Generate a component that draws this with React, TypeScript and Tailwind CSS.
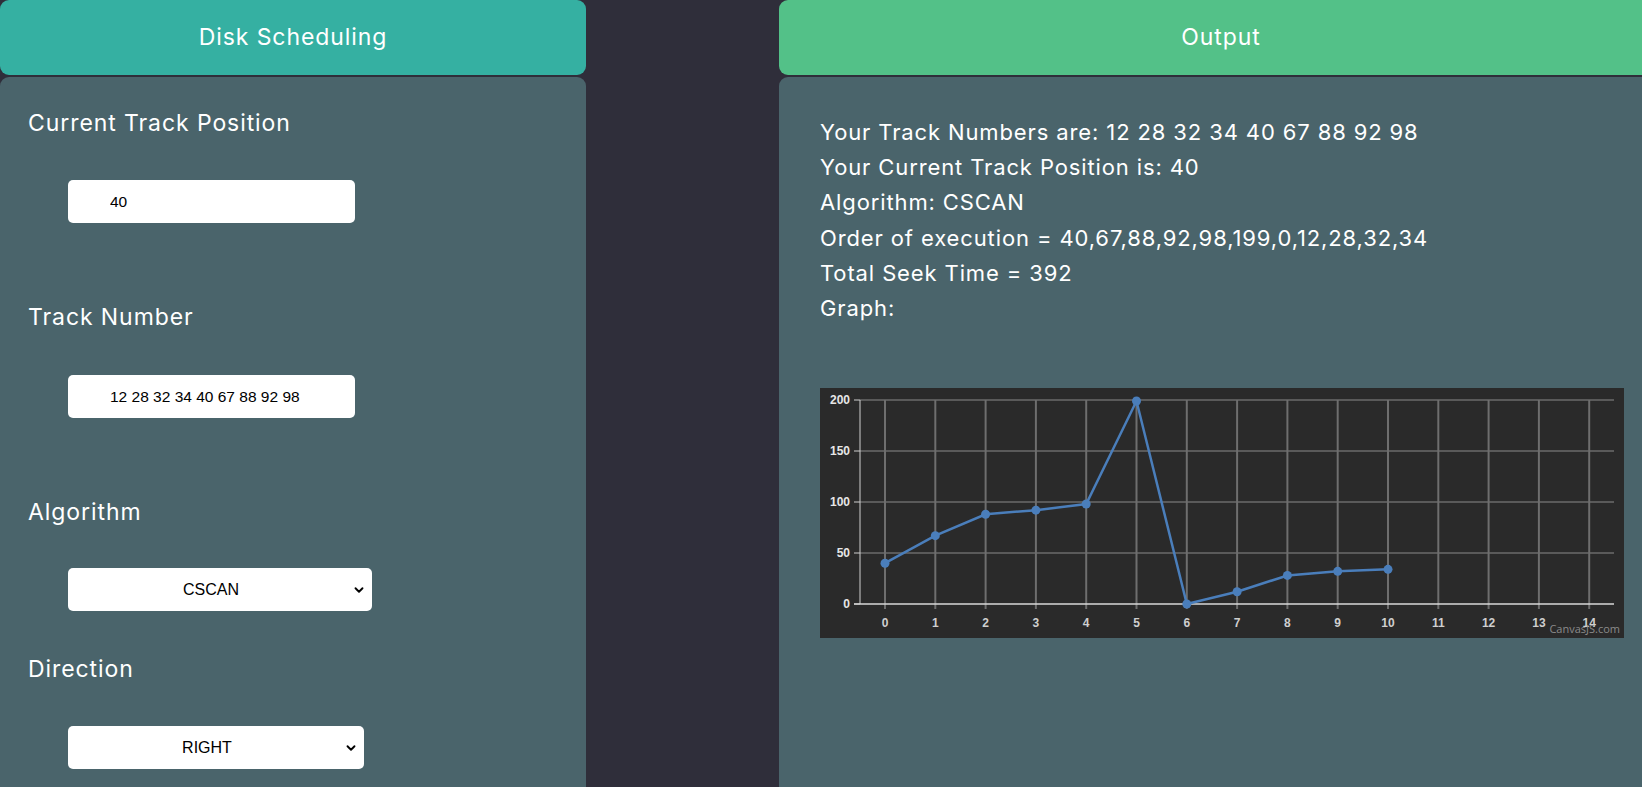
import { ChevronDown } from "lucide-react";

const font = { fontFamily: "Inter, 'Noto Sans', sans-serif" };

const TRACKS = [40, 67, 88, 92, 98, 199, 0, 12, 28, 32, 34];

function Label({ text, mt }: { text: string; mt: string }) {
  return (
    <div className={`${mt} h-[33px] leading-[33px] text-[23px] tracking-[0.04em] text-white`}>
      {text}
    </div>
  );
}

function TextBox({ value, mt }: { value: string; mt: string }) {
  return (
    <input
      readOnly
      value={value}
      className={`${mt} ml-[40px] h-[43px] w-[287px] rounded-[5px] bg-white pl-[42px] text-[15.5px] text-black outline-none`}
      style={{ fontFamily: "'Liberation Sans', Arial, sans-serif" }}
    />
  );
}

function Dropdown({ value, width, mt }: { value: string; width: string; mt: string }) {
  return (
    <div className={`${mt} relative ml-[40px] h-[43px] ${width}`}>
      <select
        value={value}
        onChange={() => {}}
        className="h-full w-full appearance-none rounded-[5px] bg-white pr-[18px] text-center text-[16px] text-black outline-none"
        style={{ fontFamily: "'Liberation Sans', Arial, sans-serif" }}
      >
        <option>{value}</option>
      </select>
      <ChevronDown
        size={14}
        strokeWidth={3.2}
        className="pointer-events-none absolute right-[6px] top-1/2 -translate-y-1/2 text-black"
      />
    </div>
  );
}

function Chart() {
  const x0 = 65;
  const step = 50.3;
  const yTop = 12;
  const yBase = 216;
  const yOf = (v: number) => yBase - v * ((yBase - yTop) / 200);
  const xs = Array.from({ length: 15 }, (_, i) => x0 + i * step);
  const pts = TRACKS.map((v, i) => `${x0 + i * step},${yOf(v)}`).join(" ");
  const labelFont = "'Liberation Sans', Arial, sans-serif";
  return (
    <div className="mt-[62px] h-[250px] w-[804px] bg-[#2a2a2a]">
      <svg width="804" height="250" viewBox="0 0 804 250">
        {[50, 100, 150, 200].map((v) => (
          <line key={v} x1={40} x2={794} y1={yOf(v)} y2={yOf(v)} stroke="#8a8a8a" strokeWidth={1} />
        ))}
        {xs.map((x, i) => (
          <line key={i} x1={x} x2={x} y1={yTop} y2={yBase + 5} stroke="#6e6e6e" strokeWidth={2} />
        ))}
        <line x1={40} x2={40} y1={yTop} y2={yBase} stroke="#cfcfcf" strokeWidth={1} />
        <line x1={34} x2={794} y1={yBase} y2={yBase} stroke="#d8d8d8" strokeWidth={1.5} />
        {[0, 50, 100, 150, 200].map((v) => (
          <g key={v}>
            <line x1={34} x2={40} y1={yOf(v)} y2={yOf(v)} stroke="#cfcfcf" strokeWidth={1} />
            <text
              x={30}
              y={yOf(v) + 4}
              textAnchor="end"
              fontSize="12"
              fontWeight="600"
              fill="#e6e6e6"
              fontFamily={labelFont}
            >
              {v}
            </text>
          </g>
        ))}
        {xs.map((x, i) => (
          <text
            key={i}
            x={x}
            y={239}
            textAnchor="middle"
            fontSize="12"
            fontWeight="600"
            fill="#cfcfcf"
            fontFamily={labelFont}
          >
            {i}
          </text>
        ))}
        <polyline points={pts} fill="none" stroke="#4a7ebb" strokeWidth={2.5} />
        {TRACKS.map((v, i) => (
          <circle key={i} cx={x0 + i * step} cy={yOf(v)} r={4.5} fill="#4a7ebb" />
        ))}
        <text
          x={800}
          y={245}
          textAnchor="end"
          fontSize="11"
          fill="#8a8a8a"
          fontFamily="'Open Sans', sans-serif"
        >
          CanvasJS.com
        </text>
      </svg>
    </div>
  );
}

export default function App() {
  return (
    <div className="flex h-[787px] w-full overflow-hidden bg-[#2f2e3a]" style={font}>
      {/* Input panel */}
      <div className="flex w-[586px] shrink-0 flex-col">
        <div className="flex h-[75px] items-center justify-center rounded-[9px] bg-[#35b0a2] text-[23px] tracking-[0.04em] text-white">
          Disk Scheduling
        </div>
        <div className="mt-[2px] flex flex-1 flex-col rounded-t-[9px] bg-[#4a646b] pl-[28px]">
          <Label text="Current Track Position" mt="mt-[30px]" />
          <TextBox value="40" mt="mt-[40px]" />
          <Label text="Track Number" mt="mt-[78px]" />
          <TextBox value="12 28 32 34 40 67 88 92 98" mt="mt-[41px]" />
          <Label text="Algorithm" mt="mt-[78px]" />
          <Dropdown value="CSCAN" width="w-[304px]" mt="mt-[39px]" />
          <Label text="Direction" mt="mt-[42px]" />
          <Dropdown value="RIGHT" width="w-[296px]" mt="mt-[40px]" />
        </div>
      </div>

      <div className="w-[193px] shrink-0" />

      {/* Output panel */}
      <div className="flex w-[884px] shrink-0 flex-col">
        <div className="flex h-[75px] items-center justify-center rounded-[9px] bg-[#53c188] text-[23px] tracking-[0.04em] text-white">
          Output
        </div>
        <div className="mt-[2px] flex flex-1 flex-col rounded-t-[9px] bg-[#4a646b] pl-[41px] pt-[38px]">
          <div className="text-[22px] leading-[35.2px] tracking-[0.04em] text-white">
            <div>Your Track Numbers are: 12 28 32 34 40 67 88 92 98</div>
            <div>Your Current Track Position is: 40</div>
            <div>Algorithm: CSCAN</div>
            <div>Order of execution = 40,67,88,92,98,199,0,12,28,32,34</div>
            <div>Total Seek Time = 392</div>
            <div>Graph:</div>
          </div>
          <Chart />
        </div>
      </div>
    </div>
  );
}
